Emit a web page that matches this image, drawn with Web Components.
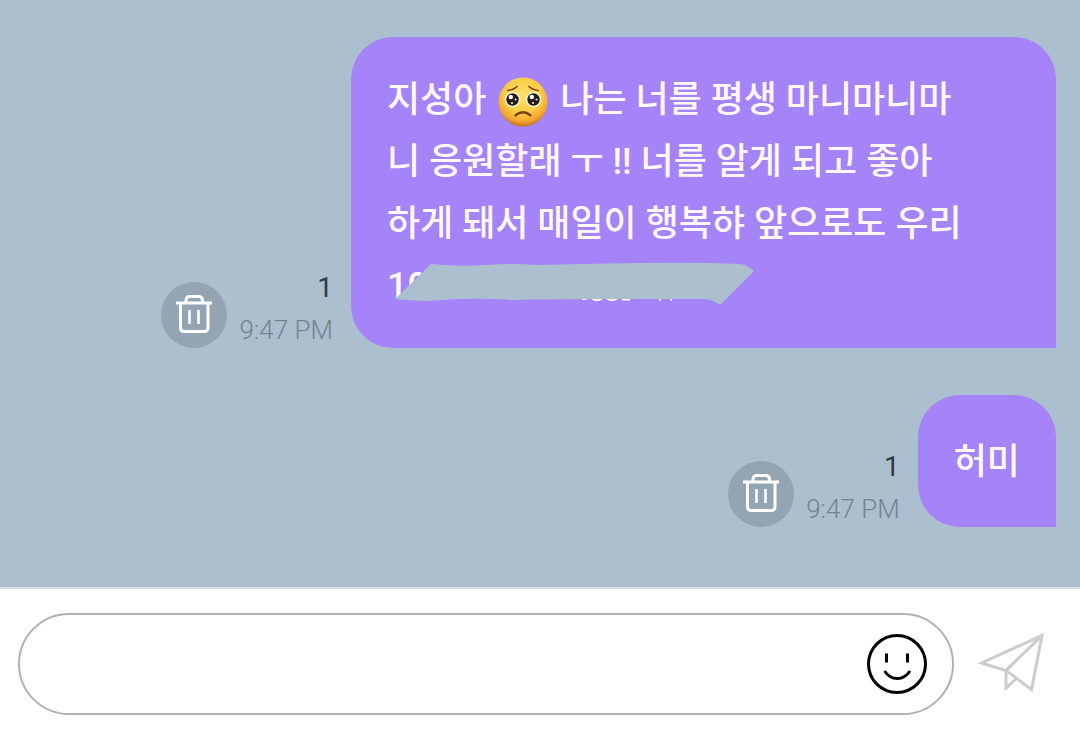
<!DOCTYPE html>
<html lang="ko">
<head>
<meta charset="utf-8">
<meta name="viewport" content="width=device-width, initial-scale=1">
<title>Chat</title>
<style>
body { margin: 0; font-family: Roboto, "Noto Sans CJK KR", sans-serif; }
</style>
</head>
<body>
<chat-screen>
  <chat-message time="9:47 PM" unread="1" wide>
    <message-line>지성아 <pleading-face></pleading-face> 나는 너를 평생 마니마니마</message-line>
    <message-line>니 응원할래 ㅜ !! 너를 알게 되고 좋아</message-line>
    <message-line>하게 돼서 매일이 행복햐 앞으로도 우리</message-line>
    <message-line>10<redaction-stroke></redaction-stroke></message-line>
  </chat-message>
  <chat-message time="9:47 PM" unread="1">
    <message-line>허미</message-line>
  </chat-message>
  <message-composer slot="composer"></message-composer>
</chat-screen>

<script>
const define = (name, html, setup) => {
  const template = document.createElement('template');
  template.innerHTML = html;
  customElements.define(name, class extends HTMLElement {
    constructor() {
      super();
      this.attachShadow({ mode: 'open' }).append(template.content.cloneNode(true));
    }
    connectedCallback() { if (setup) setup(this, this.shadowRoot); }
  });
};

define('chat-screen', `
<style>
  :host { display: flex; flex-direction: column; min-height: 100vh; background: #abbfcf; }
  main { flex: 1; display: flex; flex-direction: column; gap: 47px; padding: 37px 24px; }
</style>
<main><slot></slot></main>
<slot name="composer"></slot>`);

define('chat-message', `
<style>
  :host { display: flex; justify-content: flex-end; align-items: flex-end; }
  .meta { display: flex; flex-direction: column; align-items: flex-end; gap: 6px; margin: 0 18px 0 12px; font-size: 26px; line-height: 36px; white-space: nowrap; }
  .unread { color: #2f3a46; font-size: 28px; }
  time { color: #748390; font-weight: 300; }
  .bubble { box-sizing: border-box; min-height: 132px; display: flex; flex-direction: column; justify-content: center; padding: 32px 36px 31px; border-radius: 42px 42px 0 42px; background: #a583f9; color: #fff8ff; font-size: 36px; font-weight: 500; line-height: 62px; }
  :host([wide]) .bubble { flex: 0 1 705px; }
</style>
<trash-button></trash-button>
<div class="meta"><span class="unread"></span><time></time></div>
<div class="bubble"><slot></slot></div>`, (host, root) => {
  root.querySelector('.unread').textContent = host.getAttribute('unread');
  root.querySelector('time').textContent = host.getAttribute('time');
});

define('message-line', `
<style>:host { display: block; position: relative; }</style>
<slot></slot>`);

define('trash-button', `
<style>
  :host { display: block; flex: none; }
  button { display: block; width: 66px; height: 66px; padding: 0; border: 0; border-radius: 50%; background: #93a4b2; }
  svg { display: block; }
</style>
<button type="button" aria-label="삭제">
  <svg width="66" height="66" viewBox="0 0 66 66" fill="none" stroke="#fff" stroke-width="3">
    <path d="M15 21H51M19.5 21V45.5Q19.5 49.5 23.500 49.500H43Q47 49.500 47 45.500V21M25 21V18.500Q25 14.500 29 14.500H37.500Q41.500 14.500 41.500 18.500V21"/>
    <path d="M28.500 28V42M37.500 28V42" stroke-width="2.600"/>
  </svg>
</button>`);

define('pleading-face', `
<style>
  :host { display: inline-block; width: 50px; height: 50px; margin: 0 3px; vertical-align: middle; }
  svg { display: block; }
</style>
<svg width="50" height="50" viewBox="0 0 50 50" role="img" aria-label="🥺">
  <defs>
    <radialGradient id="skin" cx=".5" cy=".36" r=".66">
      <stop offset="0" stop-color="#ffe067"/><stop offset=".55" stop-color="#fdcd45"/><stop offset=".82" stop-color="#f0a52f"/><stop offset="1" stop-color="#b96518"/>
    </radialGradient>
  </defs>
  <circle cx="25" cy="25" r="24.500" fill="url(#skin)"/>
  <circle cx="14.500" cy="22.500" r="7.800" fill="#fff5d2"/>
  <circle cx="35.500" cy="22.500" r="7.800" fill="#fff5d2"/>
  <circle cx="14.500" cy="22.500" r="6.200" fill="#241c1c"/>
  <circle cx="35.500" cy="22.500" r="6.200" fill="#241c1c"/>
  <g fill="#fff">
    <circle cx="12.800" cy="20" r="2.200"/><circle cx="33.800" cy="20" r="2.200"/>
    <circle cx="17.500" cy="22.500" r="1"/><circle cx="38.500" cy="22.500" r="1"/>
    <circle cx="14" cy="26" r="1"/><circle cx="35" cy="26" r="1"/>
  </g>
  <g fill="none" stroke="#7b3f12" stroke-linecap="round">
    <path d="M10 13.500Q16 12.500 19 9.500M31 9.500Q34 12.500 40 13.500" stroke-width="1.600"/>
    <path d="M17.500 38.200Q25 32.200 32.500 38.200" stroke-width="2.400"/>
  </g>
</svg>`);

define('redaction-stroke', `
<style>
  :host { position: absolute; left: 0; top: 0; }
  svg { display: block; }
</style>
<svg width="372" height="56" viewBox="-1 1 372 56" aria-hidden="true">
  <path d="M194 45H199M204 44.500Q209 48 214 44.500M219 44.500Q224 48 229 44.500M234 45.500H242M272 45V46.500M283 45V46.500" stroke="#fff8ff" stroke-width="2" fill="none"/>
  <path fill="#abbfcf" d="M43 10Q75 13 98 11T149 11Q190 10 252 9Q310 8 352 10Q360 11 366 17L332 51Q324 44 312 45H212Q160 45 125 46Q100 44 69 45Q40 47 35 47Q20 46 7 45Z"/>
</svg>`);

define('message-composer', `
<style>
  :host { display: block; border-top: 2px solid #d8e1e8; background: #fff; }
  form { display: flex; align-items: center; gap: 24px; padding: 24px 34px 24px 18px; }
  .field { box-sizing: border-box; flex: 1; min-width: 0; height: 102px; display: flex; align-items: center; gap: 24px; padding: 0 25px 0 48px; border: 2px solid #b1b1b1; border-radius: 51px; }
  input { flex: 1; min-width: 0; height: 62px; padding: 0; border: 0; outline: 0; background: none; font: inherit; font-size: 36px; }
  button { flex: none; display: block; padding: 0; border: 0; background: none; }
  svg { display: block; }
</style>
<form>
  <div class="field">
    <input type="text" aria-label="메시지">
    <button type="button" aria-label="이모티콘">
      <svg width="60" height="60" viewBox="0 0 60 60" fill="none" stroke="#000" stroke-width="3">
        <circle cx="30" cy="30" r="28.500"/>
        <path d="M19.500 19.500V28.500M40.500 19.500V28.500"/>
        <path d="M17.500 37C24 47 36.500 47 43 37" stroke-width="2.800"/>
      </svg>
    </button>
  </div>
  <button type="button" aria-label="보내기">
    <svg width="68" height="62" viewBox="0 0 68 62" fill="none" stroke="#ccc" stroke-width="3">
      <path d="M3.500 30L64 2.500L53.500 56.500L28 37.500Z"/>
      <path d="M64 2.500L28 37.500V55L38 46"/>
    </svg>
  </button>
</form>`);
</script>
</body>
</html>
